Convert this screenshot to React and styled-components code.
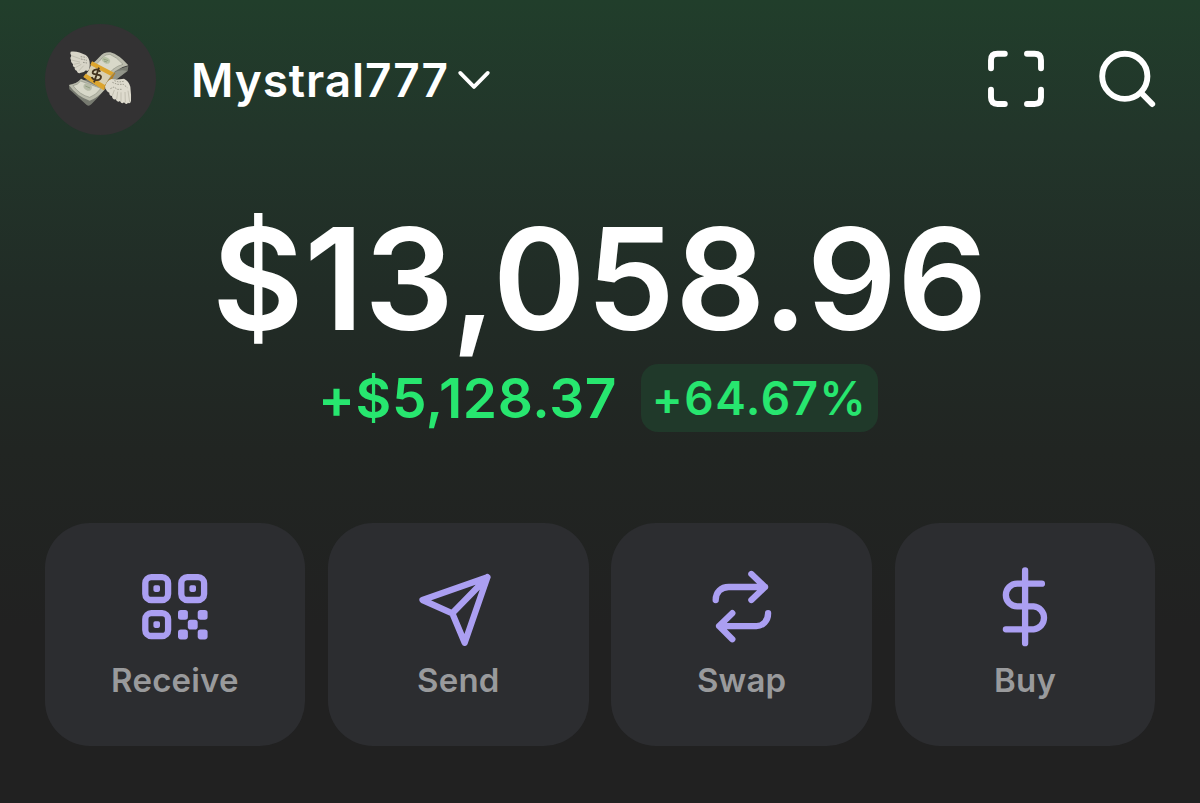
import React from 'react';
import styled, { createGlobalStyle } from 'styled-components';

const GlobalStyle = createGlobalStyle`
  *, *::before, *::after { box-sizing: border-box; }
  body {
    margin: 0;
    background: #212121;
    font-family: Inter, "Liberation Sans", sans-serif;
  }
  button {
    margin: 0;
    padding: 0;
    border: 0;
    background: none;
    color: inherit;
    font: inherit;
  }
  svg { display: block; flex: none; overflow: visible; }
`;

const Screen = styled.main`
  width: 1200px;
  height: 803px;
  padding: 24px 45px 0;
  overflow: hidden;
  background: linear-gradient(180deg, #213e2b 0%, #22352a 17%, #212c26 36%, #212522 56%, #212121 78%, #212121 100%);
`;

const Header = styled.header`
  display: flex;
  align-items: center;
  justify-content: space-between;
  height: 111px;
`;

const Account = styled.button`
  display: flex;
  align-items: center;
`;

const Avatar = styled.span`
  display: flex;
  align-items: center;
  justify-content: center;
  width: 111px;
  height: 111px;
  padding: 0 1px 2px 0;
  border-radius: 50%;
  background: #333233;
`;

const AccountName = styled.span`
  width: 267px;
  margin: 1px 0 0 35px;
  color: #fff;
  font-size: 46px;
  font-weight: 600;
  line-height: 56px;
  letter-spacing: 0.9px;
  text-align: left;
  white-space: nowrap;
`;

const HeaderActions = styled.nav`
  display: flex;
  gap: 55px;
  padding-bottom: 1px;
`;

const Balance = styled.section`
  display: flex;
  flex-direction: column;
  align-items: center;
  margin-top: 67px;
`;

const Amount = styled.div`
  color: #fff;
  font-size: 141px;
  font-weight: 600;
  line-height: 154px;
  letter-spacing: 0.4px;
  white-space: nowrap;
`;

const ChangeRow = styled.div`
  display: flex;
  align-items: center;
  gap: 24px;
  height: 68px;
  margin: 8px 4px 0 0;
  color: #27e66f;
`;

const ChangeValue = styled.span`
  font-size: 55px;
  font-weight: 600;
  line-height: 68px;
  letter-spacing: 0.6px;
`;

const ChangeBadge = styled.span`
  display: flex;
  align-items: center;
  justify-content: center;
  width: 237px;
  height: 68px;
  border-radius: 17px;
  background: #20392a;
  font-size: 46px;
  font-weight: 600;
  line-height: 68px;
  letter-spacing: 1.5px;
`;

const Actions = styled.section`
  display: grid;
  grid-template-columns: repeat(4, 1fr);
  gap: 22.7px;
  margin: 91px -0.4px 0;
`;

const ActionCard = styled.button`
  display: flex;
  flex-direction: column;
  align-items: center;
  height: 223px;
  padding-top: 44px;
  border-radius: 45px;
  background: #2c2d30;
  color: #ab9ff2;
`;

const ActionLabel = styled.span`
  margin-top: 13px;
  color: #999a9c;
  font-size: 33px;
  font-weight: 600;
  line-height: 40px;
  letter-spacing: 0.2px;
`;

const LineIcon = styled.svg`
  fill: none;
  stroke: currentColor;
  stroke-width: ${(p) => p.$weight || 6.3}px;
  stroke-linecap: round;
  stroke-linejoin: round;
  color: ${(p) => p.$color || 'inherit'};
`;

const MoneyWings = () => (
  <svg width="72" height="66" viewBox="0 0 216 198">
    <path d="M15 117 L16 130 L68 177 Q75 182 82 175 Q100 158 120 133 L150 106 L191 75 L193 60 Z" fill="#777a70" />
    <path d="M51 98 Q38 114 15 117 Q38 151 77 164 Q100 156 122 131 Z" fill="#bbbcad" />
    <path d="M82 55 Q98 43 107 32 Q120 17 139 19 Q164 25 193 58 Q172 62 153 76 L139 92 Z" fill="#bbbcad" />
    <path d="M50 105 Q41 117 27 119 Q48 147 77 154 Q96 148 111 127 Z" fill="#d8d8c9" stroke="#8f9385" strokeWidth="2" />
    <path d="M96 55 Q108 45 114 36 Q126 23 138 25 Q158 33 177 55 Q161 59 147 70 L138 79 Z" fill="#d8d8c9" stroke="#8f9385" strokeWidth="2" />
    <ellipse cx="71" cy="123" rx="13" ry="10" transform="rotate(30 71 123)" fill="#b6bba7" />
    <ellipse cx="126" cy="43" rx="13" ry="9" transform="rotate(27 126 43)" fill="#b7c1a5" />
    <path d="M118 39 L133 44 M120 45 L129 48 M64 120 L78 126" stroke="#80906e" strokeWidth="2" />
    <path d="M84 47 L150 81 Q130 97 119 132 L59 92 Q75 79 84 47 Z" fill="#d8cfb1" />
    <path d="M84 46 L152 81 L143 91 L79 57 Z" fill="#dca52e" />
    <path d="M65 83 L124 118 L119 133 L58 93 Z" fill="#dca52e" />
    <path d="M148 81 Q166 68 189 75 L148 107 L120 133 Q125 108 148 81 Z" fill="#92958a" />
    <path d="M143 89 L151 80 L154 81 L140 108 L119 133 L123 117 Z" fill="#b58023" />
    <path d="M109 77 C101 66 87 71 86 79 C84 89 110 82 111 92 C111 104 89 107 83 93 M105 65 L90 109" fill="none" stroke="#443420" strokeWidth="5.5" />
    <path d="M76 69 C79 52 78 37 65 27 C51 20 34 14 20 17 Q17 22 22 29 Q17 34 21 43 Q19 49 27 55 Q25 62 32 64 Q31 73 38 74 Q42 84 48 81 Q60 81 66 73 Q71 78 76 69 Z" fill="#d8d5c8" />
    <path d="M23 29 L50 39 M22 42 L48 48 M29 55 L48 51 M34 65 L52 55 M44 75 L59 59" stroke="#c0beb0" strokeWidth="3" />
    <path d="M50 32 L67 34 M51 39 L69 43 M57 49 L69 51" stroke="#77776c" strokeWidth="2" strokeDasharray="5 3" />
    <path d="M123 122 Q127 106 142 99 Q158 102 180 98 Q195 106 199 122 Q202 147 201 165 Q198 176 192 170 Q187 179 180 169 Q173 176 168 165 Q160 171 155 160 Q145 162 144 150 Q135 149 136 140 Q127 137 123 122 Z" fill="#dedbce" />
    <path d="M145 149 L151 132 M158 160 L161 137 M171 166 L171 139 M184 169 L183 138 M197 169 L192 134" stroke="#c2bfb1" strokeWidth="3" />
    <path d="M145 109 L160 115 L178 115 L190 125 M151 104 L164 108 L179 106 M139 128 L150 123 L160 130 L174 130" fill="none" stroke="#818073" strokeWidth="2" strokeDasharray="5 3" />
  </svg>
);

const Chevron = () => (
  <LineIcon $weight={3.8} $color="#fff" width="32" height="20" viewBox="0 0 32 20">
    <path d="M2.2 2.9 L16 16.9 L29.8 2.9" />
  </LineIcon>
);

const ScanIcon = () => (
  <LineIcon $weight={5.9} $color="#fff" width="56" height="56" viewBox="0 0 56 56">
    <path d="M3 17.2 V9.2 Q3 2.8 9.5 2.8 H16.8 M39 2.8 H46.5 Q53 2.8 53 9.2 V17.2 M53 38.8 V46.5 Q53 53 46.5 53 H39 M16.8 53 H9.5 Q3 53 3 46.5 V38.8" />
  </LineIcon>
);

const SearchIcon = () => (
  <LineIcon $weight={5.9} $color="#fff" width="56" height="56" viewBox="0 0 56 56">
    <circle cx="25.8" cy="25.3" r="22.6" />
    <path d="M42.1 41.7 L53.2 53" />
  </LineIcon>
);

const ReceiveIcon = () => (
  <LineIcon width="80" height="80" viewBox="0 0 80 80">
    {[[10.3, 10.2], [46.3, 10.2], [10.3, 46.2]].map(([x, y]) => (
      <g key={`${x}-${y}`}>
        <rect x={x} y={y} width="22.8" height="22.8" rx="6" />
        <rect x={x + 8.1} y={y + 8.1} width="6.6" height="6.6" rx="1.8" fill="currentColor" stroke="none" />
      </g>
    ))}
    {[[43, 43], [62.7, 43], [52.8, 52.8], [43, 62.6], [62.7, 62.6]].map(([x, y]) => (
      <rect key={`${x}-${y}`} x={x} y={y} width="9.9" height="9.8" rx="2.8" fill="currentColor" stroke="none" />
    ))}
  </LineIcon>
);

const SendIcon = () => (
  <LineIcon width="80" height="80" viewBox="0 0 80 80">
    <path d="M69.4 10.2 L4.5 33 L34.3 46.3 L46.7 75.8 Z M34.3 46.3 L69.4 10.2" />
  </LineIcon>
);

const SwapIcon = () => (
  <LineIcon width="80" height="80" viewBox="0 0 80 80">
    <path d="M13.7 33 C13.7 25.2 19.2 20 26.7 20 H63 M49.4 7 L63 20 L49.4 33" />
    <path d="M66.1 46.2 C66.1 54 60.6 59.1 54.4 59.1 H17.1 M30.3 46.2 L17.1 59.1 L30.3 72.2" />
  </LineIcon>
);

const BuyIcon = () => (
  <LineIcon width="80" height="80" viewBox="0 0 80 80">
    <path d="M40.1 3.4 V76.2 M56.9 16.7 H32.2 A11.3 11.3 0 0 0 32.2 39.4 H48.6 A11.5 11.5 0 0 1 48.6 62.3 H20.9" />
  </LineIcon>
);

const ACTIONS = [
  { label: 'Receive', Icon: ReceiveIcon },
  { label: 'Send', Icon: SendIcon },
  { label: 'Swap', Icon: SwapIcon },
  { label: 'Buy', Icon: BuyIcon },
];

export default function App() {
  return (
    <>
      <GlobalStyle />
      <Screen>
        <Header>
          <Account>
            <Avatar><MoneyWings /></Avatar>
            <AccountName>Mystral777</AccountName>
            <Chevron />
          </Account>
          <HeaderActions>
            <button aria-label="Scan"><ScanIcon /></button>
            <button aria-label="Search"><SearchIcon /></button>
          </HeaderActions>
        </Header>
        <Balance>
          <Amount>$13,058.96</Amount>
          <ChangeRow>
            <ChangeValue>+$5,128.37</ChangeValue>
            <ChangeBadge>+64.67%</ChangeBadge>
          </ChangeRow>
        </Balance>
        <Actions>
          {ACTIONS.map(({ label, Icon }) => (
            <ActionCard key={label}>
              <Icon />
              <ActionLabel>{label}</ActionLabel>
            </ActionCard>
          ))}
        </Actions>
      </Screen>
    </>
  );
}
